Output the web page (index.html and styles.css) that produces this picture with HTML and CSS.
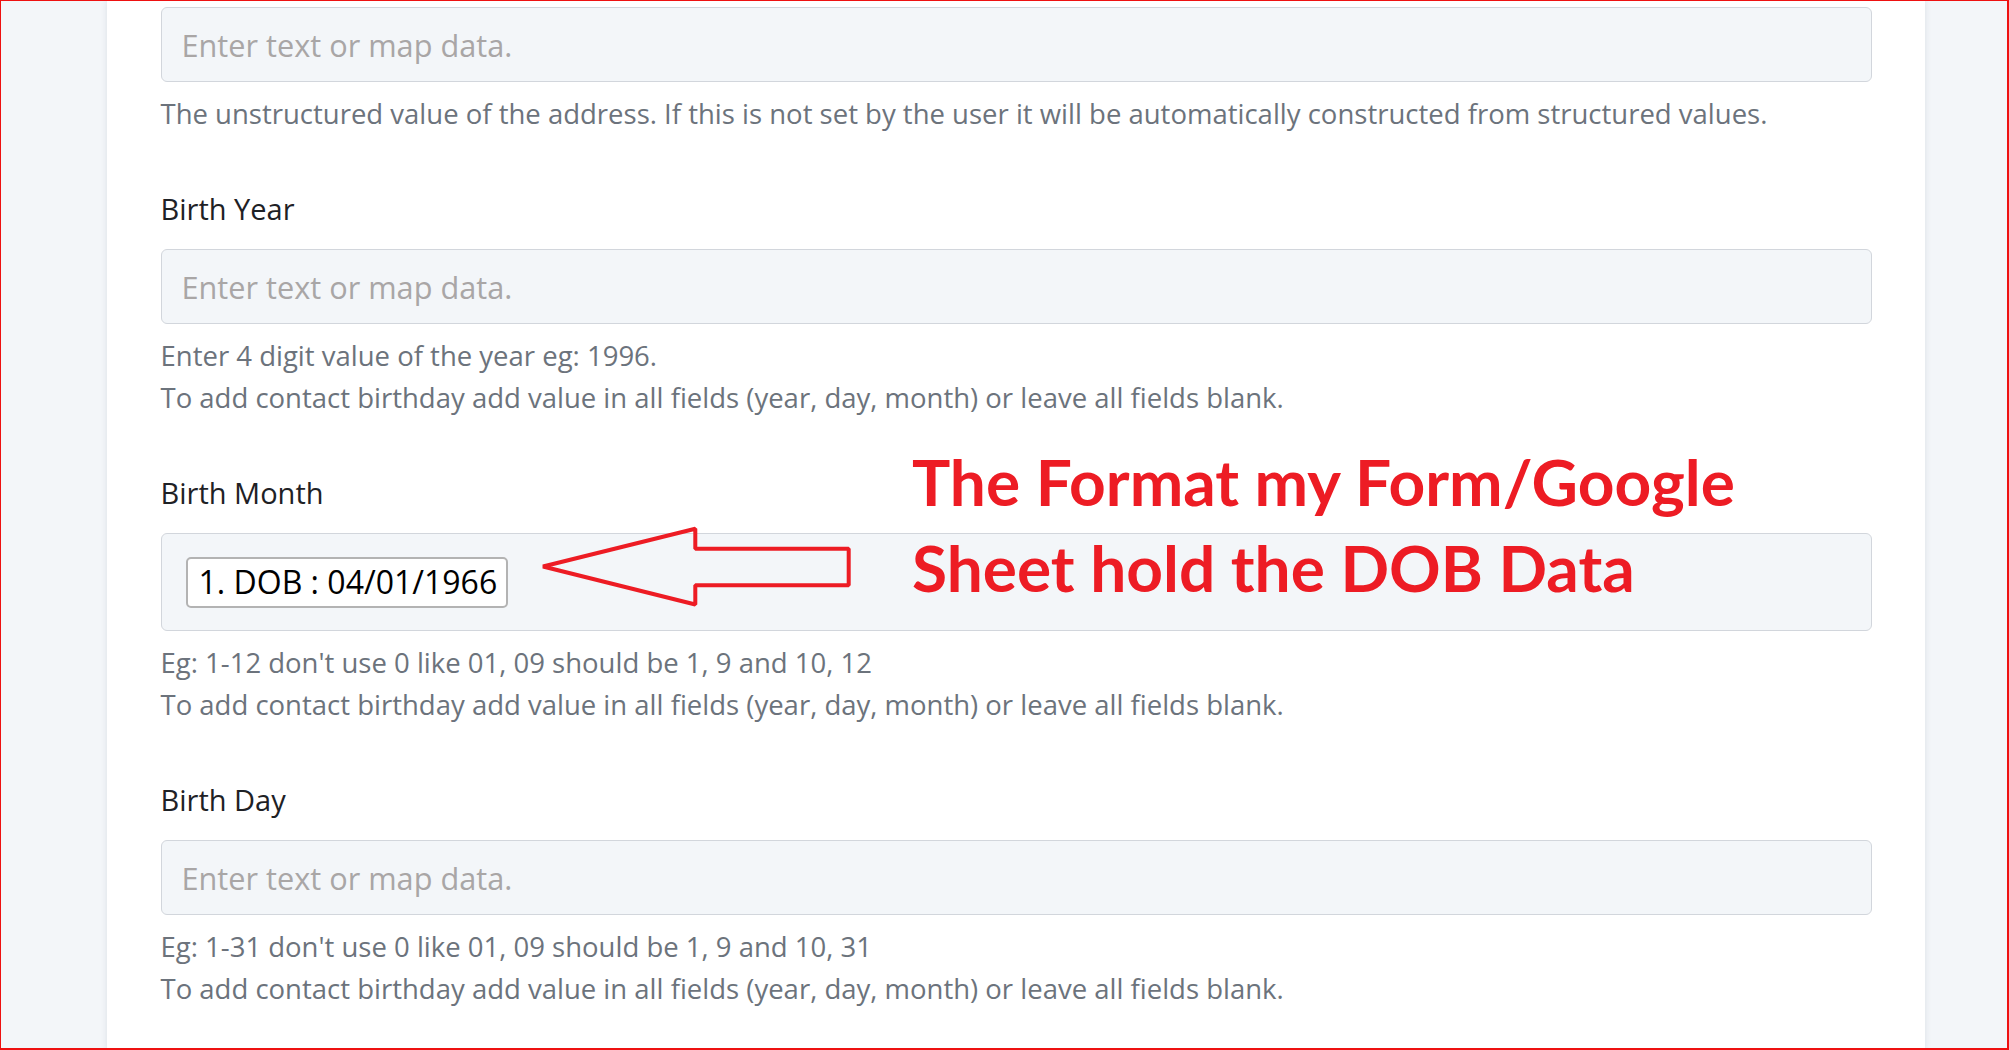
FILE: index.html
```html
<!DOCTYPE html>
<html lang="en">

<head>
    <meta charset="UTF-8">
    <meta name="viewport" content="width=device-width, initial-scale=1.0">
    <title>Contact Fields</title>
    <link rel="stylesheet" href="styles.css">
</head>

<body>
    <div class="frame">
        <div class="card">
            <div class="field">
                <input class="map-input" type="text" placeholder="Enter text or map data.">
                <p class="help">The unstructured value of the address. If this is not set by the user it will be automatically constructed from structured values.</p>
            </div>

            <div class="field">
                <label class="field-label" for="birth-year">Birth Year</label>
                <input class="map-input" id="birth-year" type="text" placeholder="Enter text or map data.">
                <p class="help">Enter 4 digit value of the year eg: 1996.<br>To add contact birthday add value in all fields (year, day, month) or leave all fields blank.</p>
            </div>

            <div class="field">
                <label class="field-label">Birth Month</label>
                <div class="map-input mapped">
                    <span class="chip">1. DOB : 04/01/1966</span>
                </div>
                <p class="help">Eg: 1-12 don't use 0 like 01, 09 should be 1, 9 and 10, 12<br>To add contact birthday add value in all fields (year, day, month) or leave all fields blank.</p>
            </div>

            <div class="field">
                <label class="field-label" for="birth-day">Birth Day</label>
                <input class="map-input" id="birth-day" type="text" placeholder="Enter text or map data.">
                <p class="help">Eg: 1-31 don't use 0 like 01, 09 should be 1, 9 and 10, 31<br>To add contact birthday add value in all fields (year, day, month) or leave all fields blank.</p>
            </div>
        </div>

        <!-- red note pointing at the mapped DOB value -->
        <svg class="note-arrow" width="330" height="100" viewBox="530 520 330 100">
            <polygon points="543,566.5 695.3,528.8 695.3,548.7 848.7,548.7 848.7,585.3 695.3,585.3 695.3,604.5"
                fill="none" stroke="#ed1c24" stroke-width="4" stroke-linejoin="bevel" />
        </svg>
        <div class="note">The Format my Form/Google<br>Sheet hold the DOB Data</div>
    </div>
</body>

</html>
```

FILE: styles.css
```css
body {
    margin: 0;
    font-family: "Open Sans", "Noto Sans", sans-serif;
    background-color: #f3f6f9;
}

.frame {
    position: relative;
    height: 1050px;
    overflow: hidden;
}

.frame::after {
    content: "";
    position: absolute;
    inset: 0;
    border-style: solid;
    border-color: #ee1111;
    border-width: 1px 2px 2px 1px;
    pointer-events: none;
}

.card {
    box-sizing: border-box;
    width: 1818px;
    min-height: 1050px;
    margin-left: 107px;
    padding: 7px 53px 0 53.5px;
    background-color: #ffffff;
    box-shadow: 0 0 6px rgba(40, 60, 90, 0.12);
}

.field {
    margin-bottom: 53px;
}

.field-label {
    display: block;
    margin-bottom: 19px;
    font-size: 29px;
    line-height: 42px;
    color: #1e2125;
}

.map-input {
    display: block;
    box-sizing: border-box;
    width: 100%;
    height: 75px;
    margin: 0;
    padding: 0 20px;
    border: 1.5px solid #d2d6dc;
    border-radius: 6px;
    background-color: #f3f6f9;
    font-family: inherit;
    font-size: 30.7px;
    color: #212529;
    outline: none;
}

.map-input::placeholder {
    color: #a9a6a6;
}

.mapped {
    height: 98px;
    padding: 22.5px 24px;
}

.chip {
    display: inline-block;
    box-sizing: border-box;
    height: 51px;
    padding: 0 9px 0 11px;
    border: 2px solid #b3b3b3;
    border-radius: 5px;
    background-color: #ffffff;
    font-size: 32px;
    line-height: 46px;
    color: #000000;
}

.help {
    margin: 11px 0 0;
    font-size: 27.5px;
    line-height: 42px;
    color: #6c737c;
}

.note-arrow {
    position: absolute;
    left: 530px;
    top: 520px;
}

.note {
    position: absolute;
    left: 912px;
    top: 439px;
    font-family: Lato, sans-serif;
    font-weight: 700;
    font-size: 64px;
    line-height: 86px;
    color: #ed1c24;
    white-space: nowrap;
}
```
